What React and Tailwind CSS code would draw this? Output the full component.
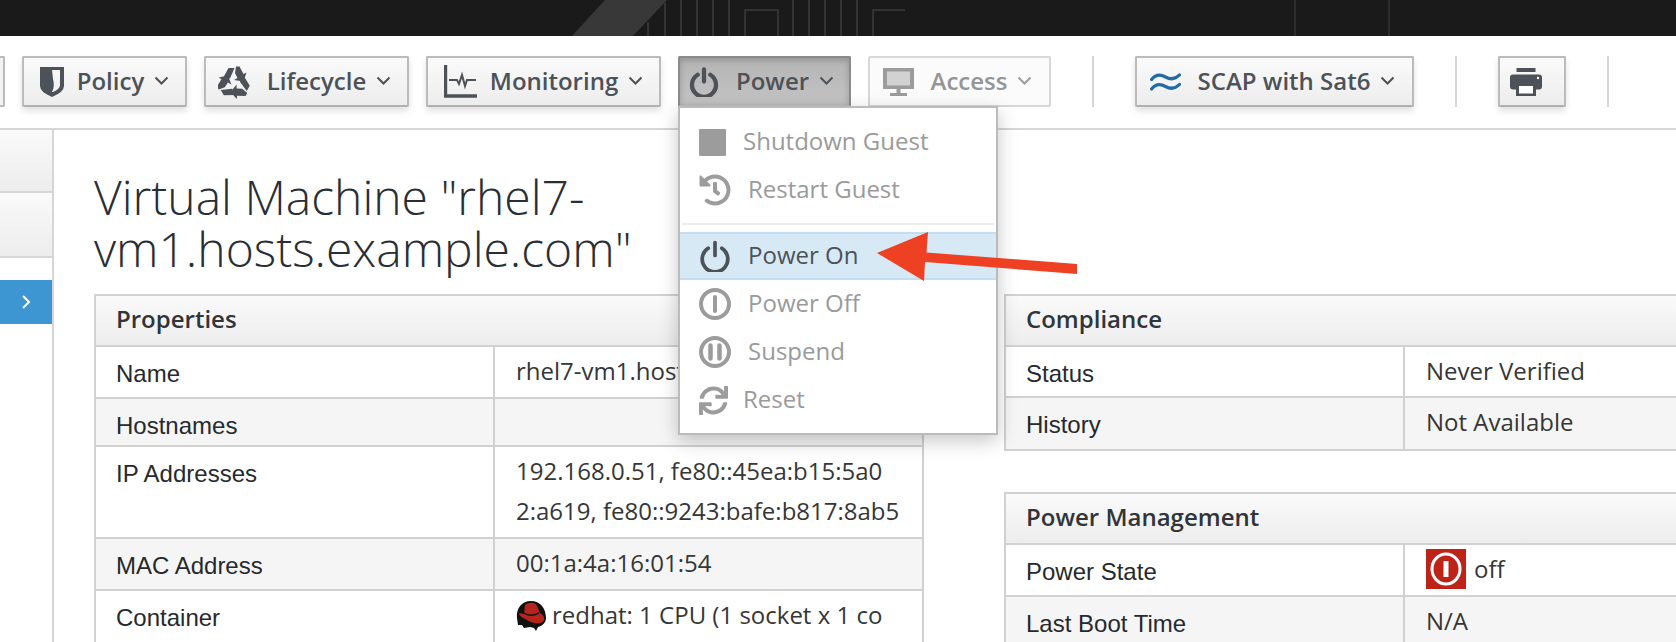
import React from "react";
import { FaHistory, FaSync } from "react-icons/fa";

const ICON = "#4d5258";
const MUTED = "#9c9c9c";

const Chevron = ({ color = ICON }) => (
  <svg width="15" height="10" viewBox="0 0 15 10" fill="none" stroke={color} strokeWidth="2">
    <path d="M1.5 1.5 L7.5 7.5 L13.5 1.5" />
  </svg>
);

const PowerIcon = ({ color = ICON, size = 30, stroke = 4.4 }) => (
  <svg width={size} height={size} viewBox="0 0 30 31" fill="none" stroke={color} strokeWidth={stroke} strokeLinecap="round">
    <path d="M8.4 8 A12.4 12.4 0 1 0 21.6 8" />
    <path d="M15 2.5 V15" />
  </svg>
);

const ShieldIcon = () => (
  <svg width="24" height="30" viewBox="0 0 24 30">
    <path fillRule="evenodd" fill={ICON} d="M0 0 H24 V19 Q24 25 12 30 Q0 25 0 19 Z M12 3 H20 V18 Q20 22 13 25 L12 25 Q15 20 13 12 Z" />
  </svg>
);

const RecycleIcon = () => (
  <svg width="32" height="34" viewBox="0 0 32 34" fill={ICON}>
    {[0, 120, 240].map((deg) => (
      <g key={deg} transform={`rotate(${deg} 16 18)`}>
        <polygon points="5,13 10.5,3 16.5,3 12,13.5" />
        <polygon points="18,1.5 21.5,1.5 25.5,9 28.5,7.5 25.5,16.5 16,15 19.5,13 17,8" />
      </g>
    ))}
  </svg>
);

const PulseIcon = () => (
  <svg width="33" height="33" viewBox="0 0 33 33" fill="none" stroke={ICON}>
    <path d="M1.5 0 V31 H33" strokeWidth="3.4" />
    <path d="M5 15 H13 L15 19 L18 10 L21 21 L23 15 H32" strokeWidth="2" />
  </svg>
);

const MonitorIcon = () => (
  <svg width="31" height="28" viewBox="0 0 31 28" fill={MUTED}>
    <path d="M3 2 H28 V19 H3 Z" fill="#d2d2d2" />
    <path fillRule="evenodd" d="M0 0 H31 V21 H0 Z M4 3.5 V17.5 H27 V3.5 Z" />
    <path d="M13.5 21 H17.5 V25 H13.5 Z M7 25 H24 V28 H7 Z" />
  </svg>
);

const WavesIcon = () => (
  <svg width="31" height="18" viewBox="0 0 31 18" fill="none" stroke="#236ba5" strokeWidth="3.2" strokeLinecap="round">
    <path d="M1.6 6.5 C6 1 11 1.5 15.5 4 C20 6.5 25 6.5 29.4 2" />
    <path d="M1.6 16 C6 10.5 11 11 15.5 13.5 C20 16 25 16 29.4 11.5" />
  </svg>
);

const PrintIcon = () => (
  <svg width="32" height="28" viewBox="0 0 32 28" fill={ICON}>
    <rect x="6.5" y="0" width="19" height="4" />
    <rect x="0" y="6.5" width="32" height="15" rx="3" />
    <rect x="6" y="15" width="20" height="13" />
    <rect x="9" y="18" width="14" height="7.5" fill="white" />
    <circle cx="28" cy="10" r="1.2" fill="white" />
  </svg>
);

const RingIcon = ({ bars }) => (
  <svg width="32" height="32" viewBox="0 0 32 32" fill="none" stroke={MUTED}>
    <circle cx="16" cy="16" r="14" strokeWidth="4" />
    {bars === 1 && <path d="M16 9 V23" strokeWidth="4" strokeLinecap="round" />}
    {bars === 2 && <path d="M11.5 9.5 V22.5 M20.5 9.5 V22.5" strokeWidth="4.5" strokeLinecap="round" />}
  </svg>
);

// icons sit a little left of where the flex centering puts them
const Nudge = ({ children }) => <span className="-ml-[4px] mr-[4px] flex">{children}</span>;

const ToolButton = ({ icon, label, width, disabled, active }) => {
  let tone = "border-[#bbbbbb] border-b-[#b0b0b0] bg-gradient-to-b from-[#fafafa] to-[#ededed] text-[#4d5258] shadow-[0_4px_6px_rgba(0,0,0,0.12)]";
  if (disabled) tone = "border-[#d7d7d7] bg-[#fbfbfb] text-[#959595]";
  if (active) tone = "border-[#8b8b8b] border-b-[#bcbcbc] bg-gradient-to-b from-[#b4b4b4] to-[#c4c4c4] text-[#4d5258] shadow-[inset_0_2px_6px_rgba(0,0,0,0.2)]";
  return (
    <div className={`h-[51px] shrink-0 flex items-center justify-center gap-[13px] border-2 rounded-[2px] text-[24px] font-semibold ${tone}`} style={{ width }}>
      {icon}
      {label && (
        <span className="flex items-center gap-[10px] pb-[2px]">
          {label}
          <Chevron color={disabled ? MUTED : ICON} />
        </span>
      )}
    </div>
  );
};

const Separator = () => <div className="w-[2px] h-[51px] mx-[24px] shrink-0 bg-[#d5d5d5]" />;

const MenuItem = ({ icon, label, gap, highlight }) => (
  <div className={`h-[48px] flex items-center pl-[19px] text-[24px] ${highlight ? "bg-[#d6e9f5] border-y-2 border-[#c3def1] text-[#4d5258]" : "text-[#9a9a9a]"}`}>
    <span className="w-[32px] flex justify-center shrink-0">{icon}</span>
    <span className="pb-[2px]" style={{ marginLeft: gap }}>{label}</span>
  </div>
);

const PowerMenu = () => (
  <div className="absolute left-0 top-[50px] w-[320px] h-[329px] z-10 bg-white border-2 border-[#bbbbbb] shadow-[0_6px_18px_rgba(0,0,0,0.22)] pt-[10px] font-normal">
    <MenuItem gap="12px" label="Shutdown Guest" icon={<span className="w-[27px] h-[27px] rounded-[1px] bg-[#9c9c9c] mr-[5px]" />} />
    <MenuItem gap="17px" label="Restart Guest" icon={<FaHistory size={32} color={MUTED} />} />
    <div className="h-[2px] mx-[2px] mt-[9px] mb-[7px] bg-[#ededed]" />
    <MenuItem gap="17px" label="Power On" highlight icon={<PowerIcon size={32} stroke={3.6} />} />
    <MenuItem gap="17px" label="Power Off" icon={<RingIcon bars={1} />} />
    <MenuItem gap="17px" label="Suspend" icon={<RingIcon bars={2} />} />
    <MenuItem gap="12px" label="Reset" icon={<span className="-ml-[4px]"><FaSync size={29} color={MUTED} /></span>} />
  </div>
);

const Toolbar = () => (
  <div className="h-[94px] pt-[20px] flex gap-[17px] border-b-2 border-[#d6d6d6]">
    <div className="h-[51px] w-[5px] shrink-0 border-2 border-l-0 border-[#bbbbbb] bg-[#f2f2f2] rounded-r-[2px]" />
    <ToolButton width="165px" icon={<ShieldIcon />} label="Policy" />
    <ToolButton width="205px" icon={<Nudge><RecycleIcon /></Nudge>} label="Lifecycle" />
    <ToolButton width="235px" icon={<PulseIcon />} label="Monitoring" />
    <div className="relative shrink-0">
      <ToolButton width="173px" active icon={<span className="-ml-[6px] mr-[4px] flex"><PowerIcon /></span>} label="Power" />
      <PowerMenu />
    </div>
    <ToolButton width="183px" disabled icon={<Nudge><MonitorIcon /></Nudge>} label="Access" />
    <Separator />
    <ToolButton width="279px" icon={<Nudge><WavesIcon /></Nudge>} label="SCAP with Sat6" />
    <Separator />
    <ToolButton width="68px" icon={<span className="-ml-[12px] flex"><PrintIcon /></span>} />
    <Separator />
  </div>
);

const Sidebar = () => (
  <div className="w-[54px] shrink-0 border-r-2 border-[#d6d6d6] flex flex-col">
    <div className="h-[63px] bg-gradient-to-b from-[#fafafa] to-[#ededed] border-b-2 border-[#d6d6d6]" />
    <div className="h-[65px] bg-gradient-to-b from-[#fafafa] to-[#ededed] border-b-2 border-[#d6d6d6]" />
    <div className="h-[22px]" />
    <div className="h-[44px] bg-[#3d95d2] flex items-center pl-[21px]">
      <svg width="10" height="16" viewBox="0 0 10 16" fill="none" stroke="white" strokeWidth="2">
        <path d="M2 2 L8 8 L2 14" />
      </svg>
    </div>
  </div>
);

const Row = ({ label, alt, h, children, last }) => (
  <div className={`flex shrink-0 ${alt ? "bg-[#f5f5f5]" : "bg-white"} ${last ? "" : "border-b-2 border-[#d1d1d1]"}`} style={{ height: h }}>
    <div className="w-[399px] shrink-0 border-r-2 border-[#d1d1d1] pl-[20px] pt-[9px] text-[24px] leading-[36px] font-['Liberation_Sans',Arial,sans-serif] text-[#26292d]">
      {label}
    </div>
    <div className="pl-[21px] pt-[4px] text-[24px] leading-[40px] text-[#363636] whitespace-pre">{children}</div>
  </div>
);

const Panel = ({ title, children }) => (
  <div className="w-[830px] shrink-0 border-2 border-[#d1d1d1]">
    <div className="h-[51px] pl-[20px] pb-[4px] flex items-center bg-gradient-to-b from-[#fafafa] to-[#ededed] border-b-2 border-[#d1d1d1] text-[24px] font-semibold text-[#30353a]">
      {title}
    </div>
    {children}
  </div>
);

const RedHat = () => (
  <svg width="30" height="30" viewBox="0 0 30 30" className="inline-block mr-[6px] -mt-[4px]">
    <path d="M1 17 C0 7 6 0 15 0 C24 0 30 7 30 17 C30 22 26 25 22 26 L20 30 L18 27 L14 26 L8 27 L6 24 L2 24 Z" fill="#111" />
    <path d="M9 4 C13 1 19 1 21 5 L24 12 C27 14 29 16 28 19 C26 24 17 23 11 19 C7 17 3 15 3 12 L8 13 Z" fill="#b5251d" />
    <path d="M8 12 C12 15 17 15 23 12" fill="none" stroke="#111" strokeWidth="1.4" />
  </svg>
);

const App = () => (
  <div className="w-[1676px] h-[642px] overflow-hidden bg-white font-['Open_Sans',sans-serif]">
    <div className="h-[36px] bg-[#1a1a1a]">
      <svg width="1676" height="36" viewBox="0 0 1676 36" fill="none" stroke="#333333" strokeWidth="2">
        <polygon points="572,36 605,0 667,0 633,36" fill="#383838" stroke="none" />
        <path d="M648 36 V22 M665 36 V3 M681 36 V0 M697 36 V0 M713 36 V0 M729 36 V0 M745 36 V10 H778 V36 M793 36 V0 M809 36 V0 M825 36 V0 M841 36 V0 M857 36 V0 M873 36 V10 H905" />
        <path d="M1295 0 V36 M1389 0 V36" stroke="#2c2c2c" />
      </svg>
    </div>
    <Toolbar />
    <div className="flex h-[512px]">
      <Sidebar />
      <div className="pl-[40px] overflow-hidden">
        <h1 className="w-[640px] pt-[41px] mb-[19px] text-[48px] leading-[52px] font-light text-[#292e34]">
          Virtual Machine "rhel7-vm1.hosts.example.com"
        </h1>
        <div className="flex gap-[80px] items-start">
          <Panel title="Properties">
            <Row label="Name" h="52px">rhel7-vm1.hosts.example.com</Row>
            <Row label="Hostnames" alt h="48px" />
            <Row label="IP Addresses" h="92px">{"192.168.0.51, fe80::45ea:b15:5a0\n2:a619, fe80::9243:bafe:b817:8ab5"}</Row>
            <Row label="MAC Address" alt h="52px">00:1a:4a:16:01:54</Row>
            <Row label="Container" h="52px" last>
              <RedHat />
              redhat: 1 CPU (1 socket x 1 co
            </Row>
          </Panel>
          <div className="flex flex-col gap-[41px]">
            <Panel title="Compliance">
              <Row label="Status" h="51px">Never Verified</Row>
              <Row label="History" alt h="51px" last>Not Available</Row>
            </Panel>
            <Panel title="Power Management">
              <Row label="Power State" h="52px">
                <span className="inline-flex items-center">
                  <span className="w-[40px] h-[40px] bg-[#be2317] flex items-center justify-center mr-[8px]">
                    <svg width="34" height="36" viewBox="0 0 34 36" fill="none" stroke="white">
                      <ellipse cx="17" cy="18" rx="14" ry="15" strokeWidth="3" />
                      <path d="M17 10 V26" strokeWidth="5" />
                    </svg>
                  </span>
                  off
                </span>
              </Row>
              <Row label="Last Boot Time" alt h="52px" last>N/A</Row>
            </Panel>
          </div>
        </div>
      </div>
    </div>
    {/* annotation arrow over the menu */}
    <svg className="absolute left-0 top-0 z-20 pointer-events-none" width="1676" height="642" viewBox="0 0 1676 642">
      <polygon points="877,253 928,232 926.5,252.5 1077,264 1077,274 925,262 924,281" fill="#ee4023" />
    </svg>
  </div>
);

export default App;
